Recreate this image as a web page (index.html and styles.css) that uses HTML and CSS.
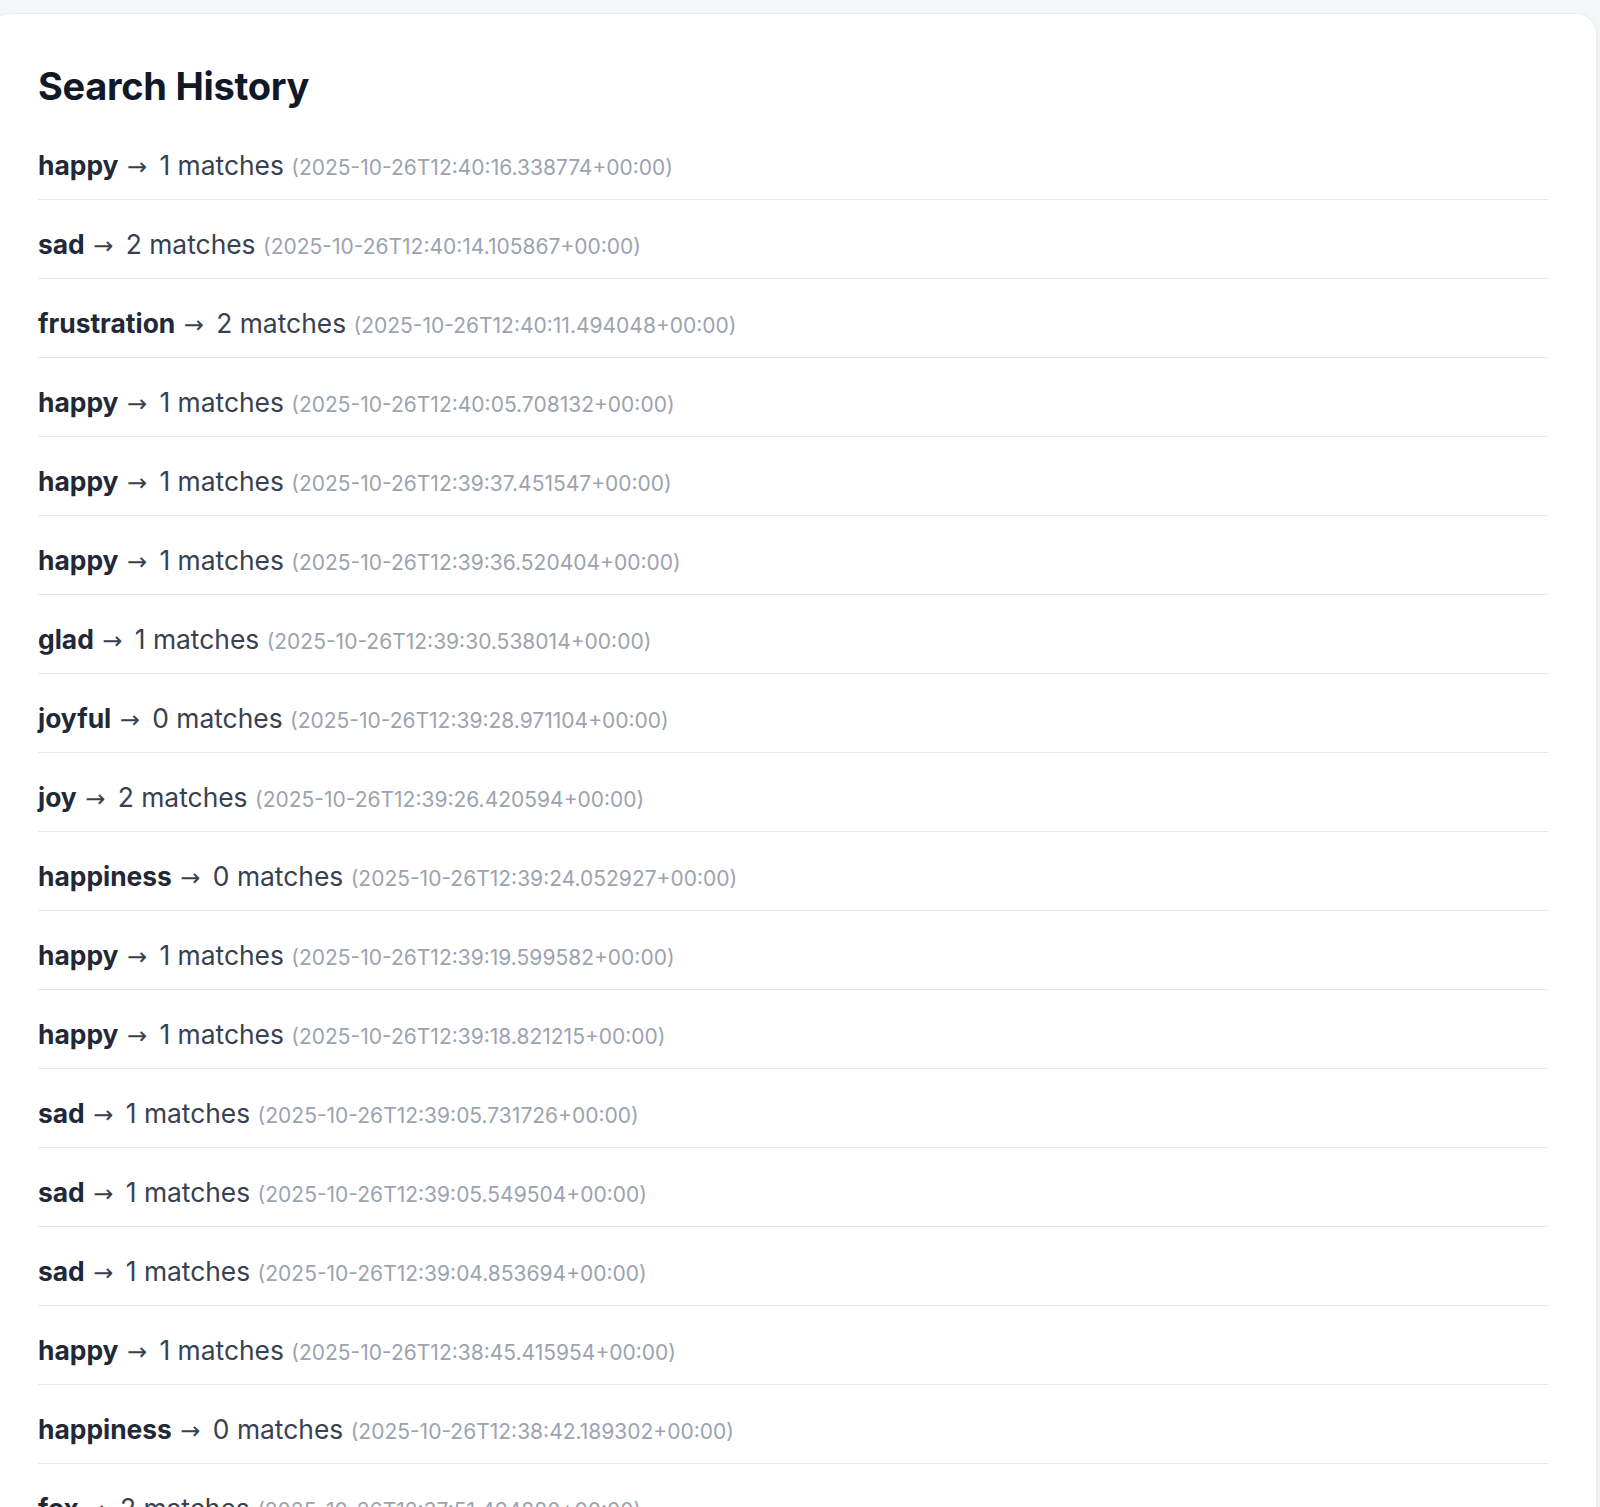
FILE: index.html
```html
<!DOCTYPE html>
<html lang="en">
<head>
<meta charset="utf-8">
<title>Search History</title>
<link rel="stylesheet" href="styles.css">
</head>
<body>
<main class="page">
  <section class="card">
    <h2 class="title">Search History</h2>
    <ul class="history">
      <li class="entry"><span class="term">happy</span> <span class="arrow">→</span> 1 matches <span class="stamp">(2025-10-26T12:40:16.338774+00:00)</span></li>
      <li class="entry"><span class="term">sad</span> <span class="arrow">→</span> 2 matches <span class="stamp">(2025-10-26T12:40:14.105867+00:00)</span></li>
      <li class="entry"><span class="term">frustration</span> <span class="arrow">→</span> 2 matches <span class="stamp">(2025-10-26T12:40:11.494048+00:00)</span></li>
      <li class="entry"><span class="term">happy</span> <span class="arrow">→</span> 1 matches <span class="stamp">(2025-10-26T12:40:05.708132+00:00)</span></li>
      <li class="entry"><span class="term">happy</span> <span class="arrow">→</span> 1 matches <span class="stamp">(2025-10-26T12:39:37.451547+00:00)</span></li>
      <li class="entry"><span class="term">happy</span> <span class="arrow">→</span> 1 matches <span class="stamp">(2025-10-26T12:39:36.520404+00:00)</span></li>
      <li class="entry"><span class="term">glad</span> <span class="arrow">→</span> 1 matches <span class="stamp">(2025-10-26T12:39:30.538014+00:00)</span></li>
      <li class="entry"><span class="term">joyful</span> <span class="arrow">→</span> 0 matches <span class="stamp">(2025-10-26T12:39:28.971104+00:00)</span></li>
      <li class="entry"><span class="term">joy</span> <span class="arrow">→</span> 2 matches <span class="stamp">(2025-10-26T12:39:26.420594+00:00)</span></li>
      <li class="entry"><span class="term">happiness</span> <span class="arrow">→</span> 0 matches <span class="stamp">(2025-10-26T12:39:24.052927+00:00)</span></li>
      <li class="entry"><span class="term">happy</span> <span class="arrow">→</span> 1 matches <span class="stamp">(2025-10-26T12:39:19.599582+00:00)</span></li>
      <li class="entry"><span class="term">happy</span> <span class="arrow">→</span> 1 matches <span class="stamp">(2025-10-26T12:39:18.821215+00:00)</span></li>
      <li class="entry"><span class="term">sad</span> <span class="arrow">→</span> 1 matches <span class="stamp">(2025-10-26T12:39:05.731726+00:00)</span></li>
      <li class="entry"><span class="term">sad</span> <span class="arrow">→</span> 1 matches <span class="stamp">(2025-10-26T12:39:05.549504+00:00)</span></li>
      <li class="entry"><span class="term">sad</span> <span class="arrow">→</span> 1 matches <span class="stamp">(2025-10-26T12:39:04.853694+00:00)</span></li>
      <li class="entry"><span class="term">happy</span> <span class="arrow">→</span> 1 matches <span class="stamp">(2025-10-26T12:38:45.415954+00:00)</span></li>
      <li class="entry"><span class="term">happiness</span> <span class="arrow">→</span> 0 matches <span class="stamp">(2025-10-26T12:38:42.189302+00:00)</span></li>
      <li class="entry"><span class="term">fox</span> <span class="arrow">→</span> 2 matches <span class="stamp">(2025-10-26T12:37:51.494880+00:00)</span></li>
    </ul>
  </section>
</main>
</body>
</html>
```

FILE: styles.css
```css
html, body {
  margin: 0;
  padding: 0;
}
body {
  background: #f4f7f9;
  font-family: Inter, "Liberation Sans", sans-serif;
  overflow: hidden;
}
.page {
  padding-top: 14px;
}
.card {
  margin-left: -10px;
  width: 1606px;
  box-sizing: border-box;
  background: #ffffff;
  border-radius: 20px;
  box-shadow: 0 0 0 1px #e8edf1, 0 2px 6px rgba(15, 23, 42, 0.06);
  padding: 49px 48px 48px;
}
.title {
  margin: 0 0 12px;
  font-size: 38px;
  line-height: 46px;
  font-weight: 700;
  color: #111827;
  letter-spacing: -0.3px;
}
.history {
  list-style: none;
  margin: 0;
  padding: 0;
}
.entry {
  padding: 29px 0 19px;
  height: 30px;
  line-height: 30px;
  font-size: 26.4px;
  color: #374151;
  border-bottom: 1px solid #e5e7eb;
  white-space: nowrap;
}
.term {
  font-weight: 700;
  color: #1f2937;
}
.arrow {
  font-family: "DejaVu Sans", sans-serif;
  font-size: 24px;
  line-height: 1;
  margin: 0 5px 0 1px;
  color: #374151;
}
.stamp {
  font-size: 21px;
  line-height: 1;
  color: #9ca3af;
}
```
